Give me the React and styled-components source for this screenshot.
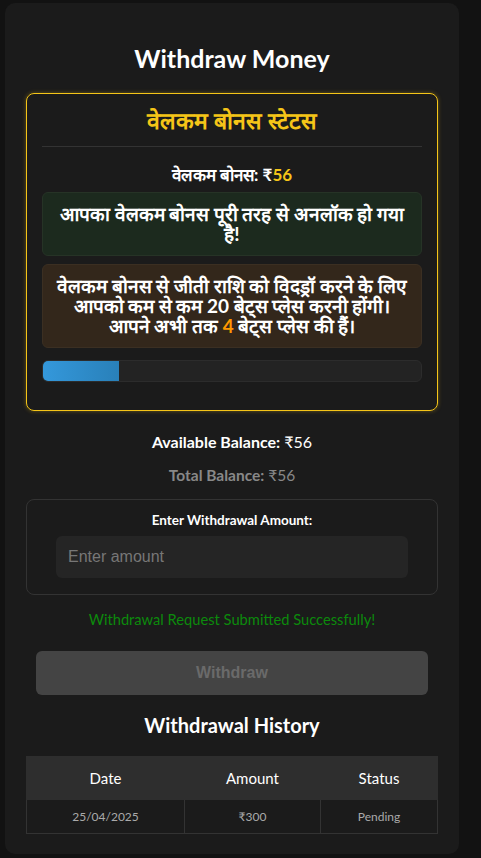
import React from "react";
import styled, { createGlobalStyle } from "styled-components";

const GlobalStyle = createGlobalStyle`
  body {
    margin: 0;
    background: #121212;
    font-family: "Trebuchet MS", Lato, sans-serif;
    color: #fff;
  }
`;

const history = [{ date: "25/04/2025", amount: "₹300", status: "Pending" }];

const App = () => {
  const placed = 4;
  const required = 20;
  return (
    <>
      <GlobalStyle />
      <Page>
        <Card>
          <Title>Withdraw Money</Title>
          <BonusBox>
            <BonusHeading>वेलकम बोनस स्टेटस</BonusHeading>
            <BonusAmount>
              वेलकम बोनस: ₹<Yellow>56</Yellow>
            </BonusAmount>
            <Notice $tone="green">आपका वेलकम बोनस पूरी तरह से अनलॉक हो गया है!</Notice>
            <Notice $tone="brown">
              वेलकम बोनस से जीती राशि को विदड्रॉ करने के लिए आपको कम से कम 20 बेट्स प्लेस करनी होंगी। आपने अभी तक{" "}
              <Orange>4</Orange> बेट्स प्लेस की हैं।
            </Notice>
            <Progress>
              <ProgressFill style={{ width: `${(placed / required) * 100}%` }} />
            </Progress>
          </BonusBox>

          <Balance>
            <strong>Available Balance:</strong> ₹56
          </Balance>
          <Balance $muted>
            <strong>Total Balance:</strong> ₹56
          </Balance>

          <InputSection>
            <Label>Enter Withdrawal Amount:</Label>
            <Input placeholder="Enter amount" />
          </InputSection>

          <Success>Withdrawal Request Submitted Successfully!</Success>

          <WithdrawButton disabled>Withdraw</WithdrawButton>

          <HistoryTitle>Withdrawal History</HistoryTitle>
          <Table>
            <colgroup>
              <col style={{ width: "158px" }} />
              <col style={{ width: "136px" }} />
              <col />
            </colgroup>
            <thead>
              <tr>
                <Th>Date</Th>
                <Th>Amount</Th>
                <Th>Status</Th>
              </tr>
            </thead>
            <tbody>
              {history.map((h) => (
                <tr key={h.date}>
                  <Td>{h.date}</Td>
                  <Td>{h.amount}</Td>
                  <Td>{h.status}</Td>
                </tr>
              ))}
            </tbody>
          </Table>
        </Card>
      </Page>
    </>
  );
};

export default App;

const Page = styled.div`
  padding: 3px 5px 5px;
`;

const Card = styled.div`
  width: 454px;
  box-sizing: border-box;
  background: #1b1b1b;
  border-radius: 10px;
  padding: 28px 21px 20px;
`;

const Title = styled.h2`
  text-align: center;
  font-size: 25px;
  font-weight: bold;
  margin: 12px 0 20px;
`;

const BonusBox = styled.div`
  border: 1px solid #f5c518;
  border-radius: 8px;
  box-shadow: 0 0 4px rgba(245, 197, 24, 0.35);
  padding: 10px 15px 28px;
`;

const BonusHeading = styled.h3`
  color: #f5c518;
  text-align: center;
  font-size: 23px;
  font-weight: bold;
  margin: 0;
  padding-bottom: 10px;
  border-bottom: 1px solid #333;
`;

const BonusAmount = styled.p`
  text-align: center;
  font-size: 17px;
  font-weight: bold;
  margin: 16px 0 6px;
`;

const Yellow = styled.span`
  color: #f5c518;
`;

const Orange = styled.span`
  color: #ff9800;
`;

const Notice = styled.div`
  background: ${({ $tone }) => ($tone === "green" ? "#1c2a1e" : "#33271b")};
  border: 1px solid ${({ $tone }) => ($tone === "green" ? "#263326" : "#3b2f22")};
  border-radius: 6px;
  padding: 11px 10px;
  margin-bottom: 8px;
  text-align: center;
  font-size: 19px;
  font-weight: bold;
  line-height: 20px;
`;

const Progress = styled.div`
  margin-top: 12px;
  height: 20px;
  background: #232323;
  border: 1px solid #2c2c2c;
  border-radius: 6px;
  overflow: hidden;
`;

const ProgressFill = styled.div`
  height: 100%;
  background: linear-gradient(90deg, #3498db, #2980b9);
`;

const Balance = styled.p`
  text-align: center;
  font-size: ${({ $muted }) => ($muted ? "15.5px" : "16px")};
  margin: ${({ $muted }) => ($muted ? "0 0 15px" : "21px 0 15px")};
  color: ${({ $muted }) => ($muted ? "#888" : "#fff")};
`;

const InputSection = styled.div`
  border: 1px solid #333;
  border-radius: 8px;
  padding: 12px 29px 16px;
  display: flex;
  flex-direction: column;
  align-items: center;
  gap: 8px;
`;

const Label = styled.label`
  font-size: 13.5px;
  font-weight: bold;
`;

const Input = styled.input`
  width: 100%;
  box-sizing: border-box;
  height: 42px;
  background: #252525;
  border: none;
  border-radius: 6px;
  padding: 0 12px;
  font-family: "Liberation Sans", Arial, sans-serif;
  font-size: 16px;
  color: #fff;
  outline: none;
  &::placeholder {
    color: #777;
  }
`;

const Success = styled.p`
  color: #0c8a0c;
  text-align: center;
  font-size: 14.7px;
  margin: 15px 0 23px;
`;

const WithdrawButton = styled.button`
  display: block;
  width: 392px;
  margin: 0 auto;
  height: 44px;
  background: #444;
  border: none;
  border-radius: 6px;
  font-family: "Liberation Sans", Arial, sans-serif;
  font-size: 16px;
  font-weight: bold;
  color: #6a6a6a;
`;

const HistoryTitle = styled.h3`
  text-align: center;
  font-size: 20px;
  font-weight: bold;
  margin: 18px 0 19px;
`;

const Table = styled.table`
  width: 100%;
  border-collapse: collapse;
  table-layout: fixed;
`;

const Th = styled.th`
  background: #2e2e2e;
  height: 42px;
  padding: 0;
  font-size: 15px;
  font-weight: normal;
  color: #fff;
  border: 1px solid #2e2e2e;
`;

const Td = styled.td`
  height: 33px;
  padding: 0;
  text-align: center;
  font-size: 12px;
  color: #aaa;
  border: 1px solid #333;
`;
